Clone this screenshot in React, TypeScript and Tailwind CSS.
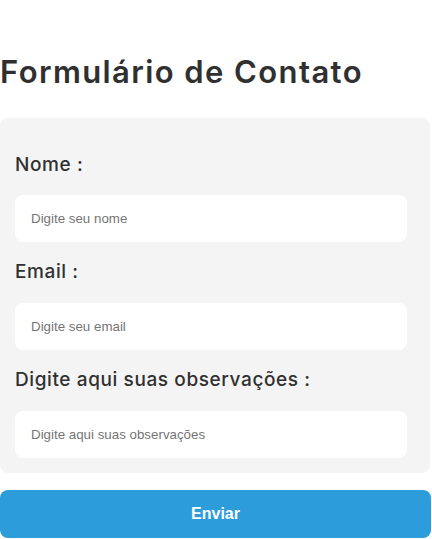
export default function App() {
  return (
    <div className="w-[432px] min-h-[539px] bg-white font-['Inter',sans-serif]">
      <h1 className="pt-[52px] text-[31px] leading-[40px] font-semibold text-[#303030] tracking-[1.4px]">
        Formulário de Contato
      </h1>

      <form className="mt-[26px] w-[430px] rounded-lg bg-[#f4f4f4] pl-[15px] pt-[35px] pb-[15px]">
        <label className="block text-[19px] leading-6 font-medium text-[#303030] tracking-[0.6px]">Nome :</label>
        <input
          type="text"
          placeholder="Digite seu nome"
          className="mt-[18px] h-[47px] w-[392px] rounded-lg bg-white px-4 font-['Liberation_Sans',Arial,sans-serif] text-[13.33px] outline-none placeholder:text-[#757575]"
        />

        <label className="mt-[18px] block text-[19px] leading-6 font-medium text-[#303030] tracking-[0.6px]">Email :</label>
        <input
          type="email"
          placeholder="Digite seu email"
          className="mt-[19px] h-[47px] w-[392px] rounded-lg bg-white px-4 font-['Liberation_Sans',Arial,sans-serif] text-[13.33px] outline-none placeholder:text-[#757575]"
        />

        <label className="mt-[18px] block text-[19px] leading-6 font-medium text-[#303030] tracking-[0.6px]">
          Digite aqui suas observações :
        </label>
        <input
          type="text"
          placeholder="Digite aqui suas observações"
          className="mt-[19px] h-[47px] w-[392px] rounded-lg bg-white px-4 font-['Liberation_Sans',Arial,sans-serif] text-[13.33px] outline-none placeholder:text-[#757575]"
        />
      </form>

      <button className="mt-[17px] h-12 w-[431px] rounded-lg bg-[#2d9cdb] font-['Liberation_Sans',Arial,sans-serif] text-base font-bold text-white">
        Enviar
      </button>
    </div>
  );
}
